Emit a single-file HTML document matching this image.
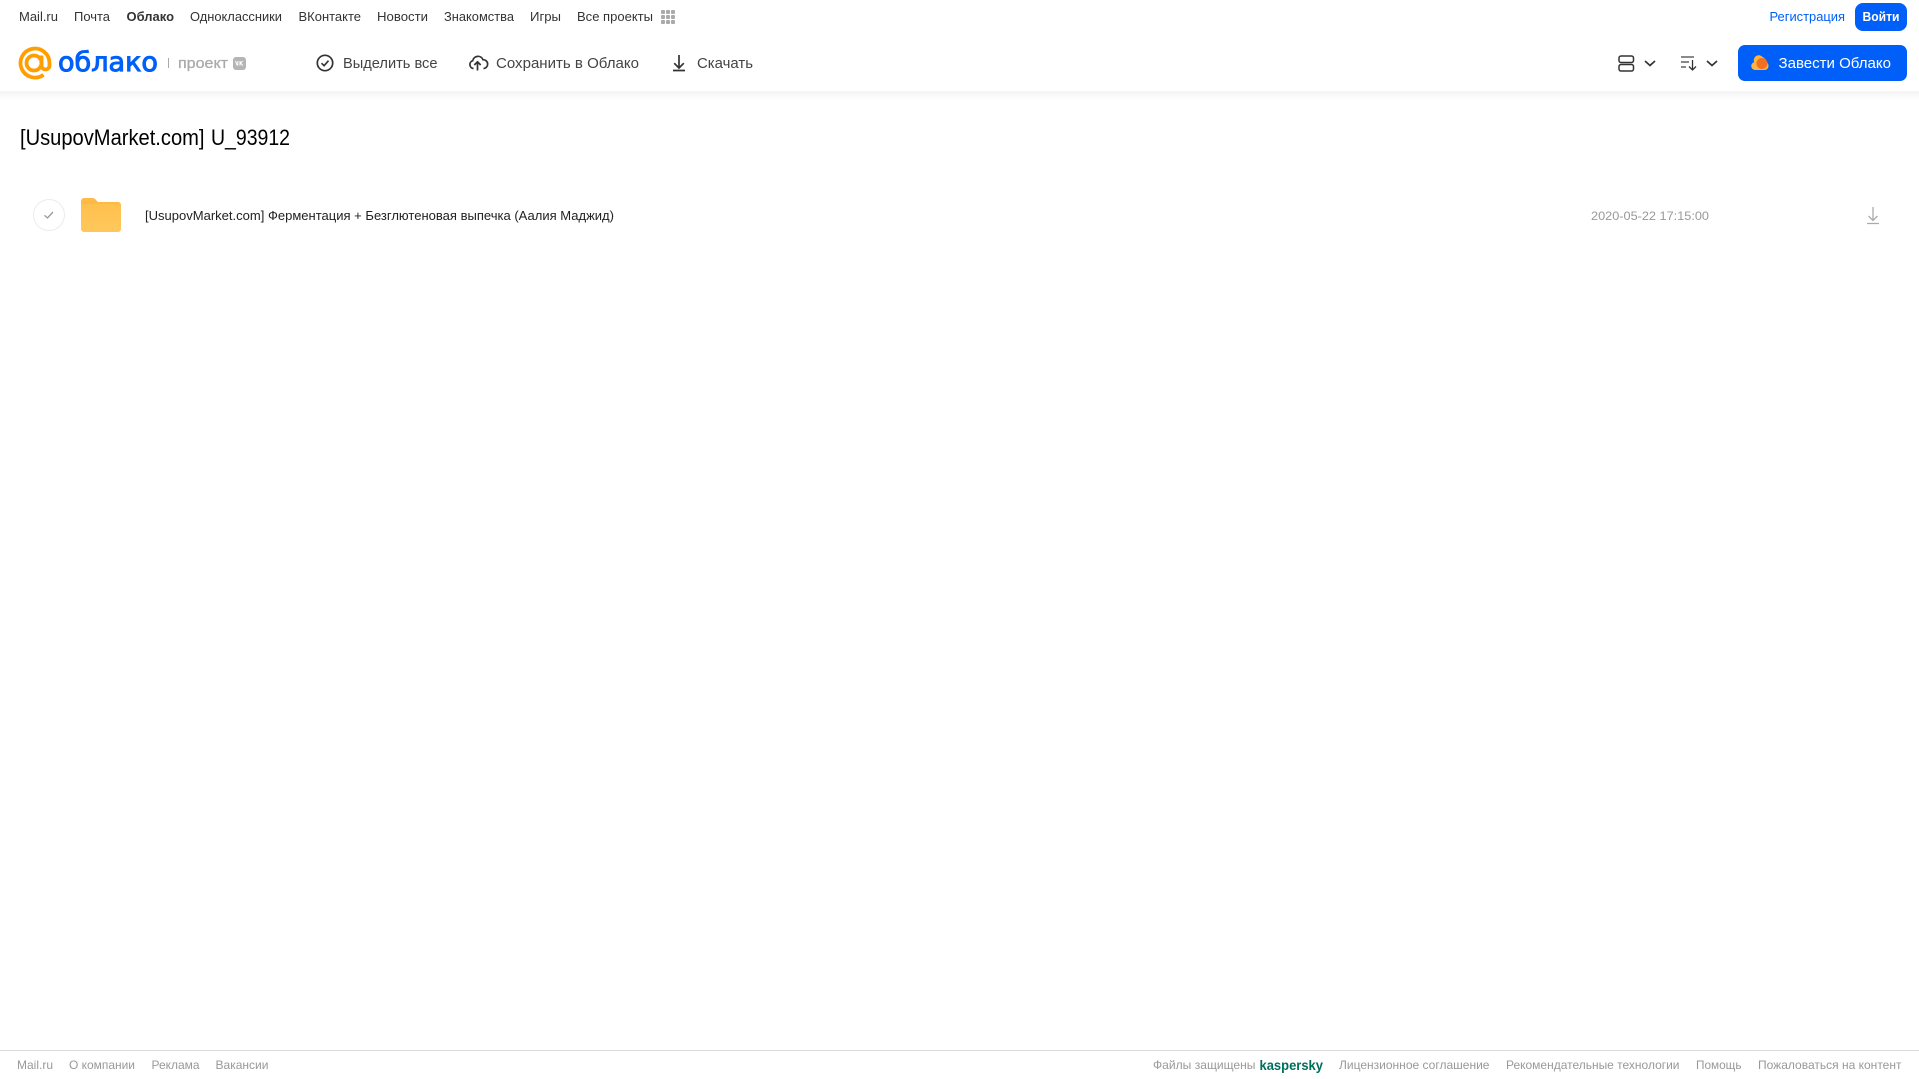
<!DOCTYPE html>
<html lang="ru">
<head>
<meta charset="utf-8">
<title>[UsupovMarket.com] U_93912</title>
<style>
html,body{margin:0;padding:0;background:#fff;width:1919px;height:1079px;overflow:hidden}
svg{display:block}
text{font-family:"Liberation Sans",sans-serif}
.n{font-size:13px;fill:#333}
.t{font-size:15px;fill:#444}
.f{font-size:12px;fill:#999}
</style>
</head>
<body>
<svg width="1919" height="1079" viewBox="0 0 1919 1079" xmlns="http://www.w3.org/2000/svg">
<defs>
<linearGradient id="sh" x1="0" y1="0" x2="0" y2="1"><stop offset="0" stop-color="#f3f3f3"/><stop offset="1" stop-color="#fff"/></linearGradient>
<linearGradient id="fo" x1="0" y1="0" x2="0" y2="1"><stop offset="0" stop-color="#ffc14d"/><stop offset="1" stop-color="#ffc75c"/></linearGradient>
</defs>
<rect width="1919" height="1079" fill="#fff"/>
<rect y="91" width="1919" height="9" fill="url(#sh)"/>

<!-- top nav -->
<text class="n" x="19" y="21" textLength="39" lengthAdjust="spacingAndGlyphs">Mail.ru</text>
<text class="n" x="74" y="21" textLength="36" lengthAdjust="spacingAndGlyphs">Почта</text>
<text class="n" x="126.500" y="21" textLength="47.500" lengthAdjust="spacingAndGlyphs" font-weight="700">Облако</text>
<text class="n" x="190" y="21" textLength="92" lengthAdjust="spacingAndGlyphs">Одноклассники</text>
<text class="n" x="298.500" y="21" textLength="62.500" lengthAdjust="spacingAndGlyphs">ВКонтакте</text>
<text class="n" x="377" y="21" textLength="51" lengthAdjust="spacingAndGlyphs">Новости</text>
<text class="n" x="444" y="21" textLength="70" lengthAdjust="spacingAndGlyphs">Знакомства</text>
<text class="n" x="530" y="21" textLength="31" lengthAdjust="spacingAndGlyphs">Игры</text>
<text class="n" x="577" y="21" textLength="76" lengthAdjust="spacingAndGlyphs">Все проекты</text>
<g fill="#aaa">
<rect x="661" y="10" width="4" height="4" rx="1"/><rect x="666" y="10" width="4" height="4" rx="1"/><rect x="671" y="10" width="4" height="4" rx="1"/>
<rect x="661" y="15" width="4" height="4" rx="1"/><rect x="666" y="15" width="4" height="4" rx="1"/><rect x="671" y="15" width="4" height="4" rx="1"/>
<rect x="661" y="20" width="4" height="4" rx="1"/><rect x="666" y="20" width="4" height="4" rx="1"/><rect x="671" y="20" width="4" height="4" rx="1"/>
</g>
<text class="n" x="1769.500" y="21" textLength="75.500" lengthAdjust="spacingAndGlyphs" style="fill:#005ff9">Регистрация</text>
<rect x="1855" y="3" width="52" height="28" rx="8" fill="#005ff9"/>
<text class="n" x="1862.500" y="21" textLength="37" lengthAdjust="spacingAndGlyphs" font-weight="700" style="fill:#fff">Войти</text>

<!-- logo -->
<path d="M41.500 55.500v10a4 4 0 0 0 8 0V63a14.500 14.500 0 1 0-6 11.800" fill="none" stroke="#ff9e00" stroke-width="3.800"/>
<circle cx="34" cy="63" r="7.500" fill="none" stroke="#ff9e00" stroke-width="3.800"/>
<text x="58" y="71" font-size="27" fill="#005ff9" stroke="#005ff9" stroke-width="1" textLength="100" lengthAdjust="spacingAndGlyphs" style="font-family:'DejaVu Sans',sans-serif">облако</text>
<rect x="168" y="58" width="1" height="10" fill="#aaa"/>
<text x="178" y="68" font-size="15" fill="#aaa" stroke="#aaa" stroke-width=".3" textLength="50" lengthAdjust="spacingAndGlyphs">проект</text>
<rect x="233" y="57" width="13" height="13" rx="3" fill="#b5b5b5"/>
<path d="M235.500 61l1.500 4h.8v-4M242.500 61l-2 2 2.300 2.500M240 61v4.500" fill="none" stroke="#fff" stroke-width="1"/>

<!-- toolbar -->
<circle cx="325" cy="63" r="7.700" fill="none" stroke="#333" stroke-width="1.700"/>
<path d="M321.500 63.200l2.600 2.500 4.400-5" fill="none" stroke="#333" stroke-width="1.600"/>
<text class="t" x="343" y="68" textLength="94.500" lengthAdjust="spacingAndGlyphs">Выделить все</text>

<path d="M473.500 68.500a4 4 0 0 1-.8-7.800 5.400 5.400 0 0 1 10.300-1 4.400 4.400 0 0 1 .5 8.800" fill="none" stroke="#333" stroke-width="1.700"/>
<path d="M477.500 70.500v-8.500M474.300 65l3.200-3.200 3.200 3.200" fill="none" stroke="#333" stroke-width="1.700"/>
<text class="t" x="496" y="68" textLength="143" lengthAdjust="spacingAndGlyphs">Сохранить в Облако</text>

<path d="M679 55v13M674.200 63.200l4.800 4.800 4.800-4.800M673 70.500h12" fill="none" stroke="#333" stroke-width="1.700"/>
<text class="t" x="697" y="68" textLength="56" lengthAdjust="spacingAndGlyphs">Скачать</text>

<!-- view / sort -->
<rect x="1619" y="56" width="14.500" height="6.500" rx="2" fill="none" stroke="#333" stroke-width="1.500"/>
<rect x="1619" y="64.500" width="14.500" height="6.500" rx="2" fill="none" stroke="#333" stroke-width="1.500"/>
<path d="M1645 61l5 4.500 5-4.500" fill="none" stroke="#333" stroke-width="1.700"/>
<path d="M1681 57h13M1681 62h8M1681 67h5" fill="none" stroke="#444" stroke-width="1.200"/>
<path d="M1692.500 60v9.500M1689 66.500l3.500 3.500 3.500-3.500" fill="none" stroke="#333" stroke-width="1.300"/>
<path d="M1707 61l5 4.500 5-4.500" fill="none" stroke="#333" stroke-width="1.700"/>

<!-- primary button -->
<rect x="1738" y="45" width="169" height="36" rx="7" fill="#005ff9"/>
<path d="M1755 70a4 4 0 0 1-1-7.800 5.500 5.500 0 0 1 2-6.200 5 5 0 0 1 6.500 1 5 5 0 0 1 3.500 5 4 4 0 0 1 2.500 4 4 4 0 0 1-4 4z" fill="#ffb43e"/>
<circle cx="1762" cy="63.500" r="5.500" fill="#f2701f"/>
<text x="1778.500" y="68" font-size="15" fill="#fff" textLength="112.500" lengthAdjust="spacingAndGlyphs">Завести Облако</text>

<!-- title -->
<text x="20" y="145" font-size="22" fill="#000" textLength="184.500" lengthAdjust="spacingAndGlyphs">[UsupovMarket.com]</text>
<text x="211" y="145" font-size="22" fill="#000" textLength="79" lengthAdjust="spacingAndGlyphs">U_93912</text>

<!-- row -->
<circle cx="49" cy="215" r="15.500" fill="#fff" stroke="#ececec" stroke-width="1"/>
<path d="M44.500 215.300l3 2.700 5.500-6" fill="none" stroke="#999" stroke-width="1.300"/>
<path d="M81 201a3 3 0 0 1 3-3h8c2 0 3 .8 4 2l2 2h20a3 3 0 0 1 3 3v2H81z" fill="#ffb946"/>
<path d="M81 204h37a3 3 0 0 1 3 3v22a3 3 0 0 1-3 3H84a3 3 0 0 1-3-3z" fill="url(#fo)"/>
<text x="145" y="220" font-size="13" fill="#222" textLength="469" lengthAdjust="spacingAndGlyphs">[UsupovMarket.com] Ферментация + Безглютеновая выпечка (Аалия Маджид)</text>
<text x="1591" y="220" font-size="12" fill="#999" textLength="118" lengthAdjust="spacingAndGlyphs">2020-05-22 17:15:00</text>
<path d="M1873 207v13M1868.500 216l4.500 4.500 4.500-4.500M1867 223.500h12" fill="none" stroke="#aaa" stroke-width="1.300"/>

<!-- footer -->
<rect y="1050" width="1919" height="1" fill="#d9d9d9"/>
<text class="f" x="17" y="1069" textLength="36" lengthAdjust="spacingAndGlyphs">Mail.ru</text>
<text class="f" x="69" y="1069" textLength="66" lengthAdjust="spacingAndGlyphs">О компании</text>
<text class="f" x="151.500" y="1069" textLength="48" lengthAdjust="spacingAndGlyphs">Реклама</text>
<text class="f" x="215.500" y="1069" textLength="53" lengthAdjust="spacingAndGlyphs">Вакансии</text>
<text class="f" x="1153" y="1069" textLength="102.500" lengthAdjust="spacingAndGlyphs">Файлы защищены</text>
<text x="1259.500" y="1070" font-size="14" font-weight="700" fill="#006d5c" textLength="63.500" lengthAdjust="spacingAndGlyphs">kaspersky</text>
<text class="f" x="1339" y="1069" textLength="150.500" lengthAdjust="spacingAndGlyphs">Лицензионное соглашение</text>
<text class="f" x="1506" y="1069" textLength="173.500" lengthAdjust="spacingAndGlyphs">Рекомендательные технологии</text>
<text class="f" x="1696" y="1069" textLength="45.500" lengthAdjust="spacingAndGlyphs">Помощь</text>
<text class="f" x="1758" y="1069" textLength="143.500" lengthAdjust="spacingAndGlyphs">Пожаловаться на контент</text>
</svg>
</body>
</html>
